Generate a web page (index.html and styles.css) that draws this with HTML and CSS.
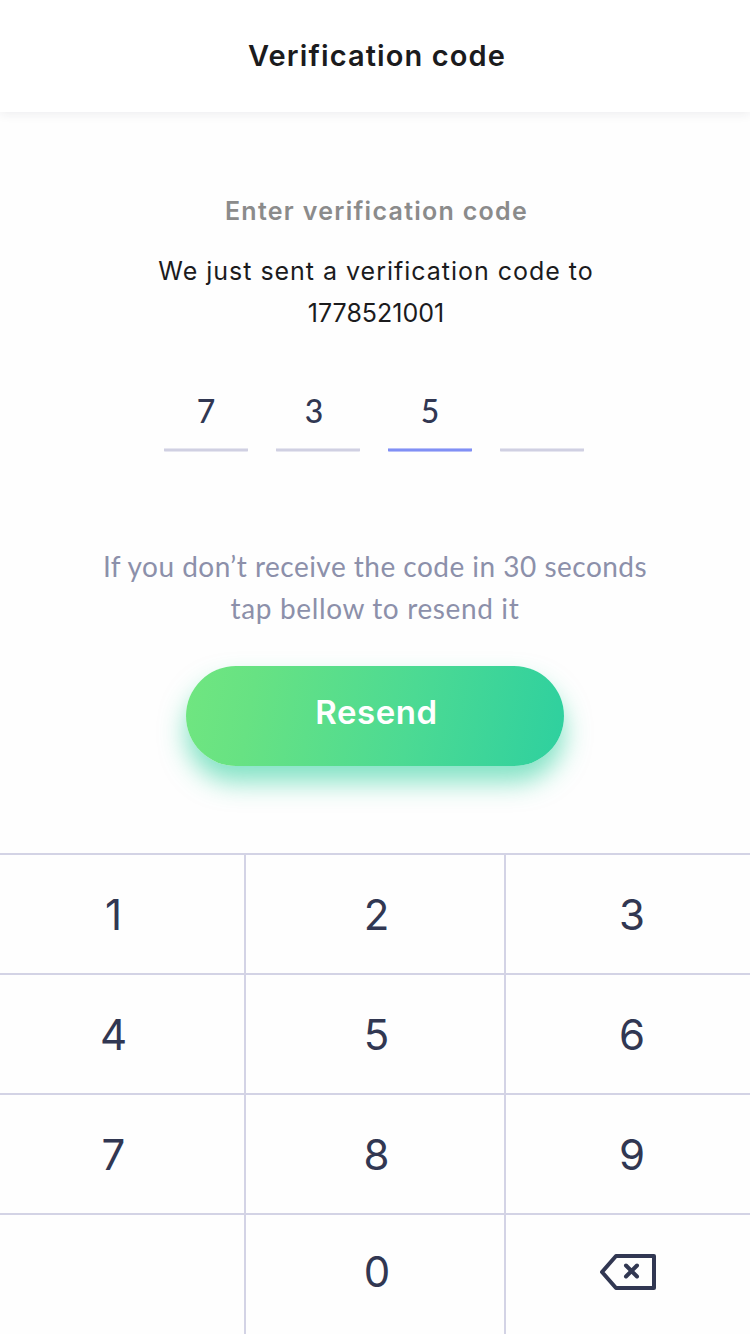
FILE: index.html
```html
<!DOCTYPE html>
<html lang="en">
<head>
<meta charset="utf-8">
<title>Verification code</title>
<link rel="stylesheet" href="styles.css">
</head>
<body>
<div class="screen">
  <header class="header"><h1 class="title">Verification code</h1></header>
  <main class="content">
    <h2 class="subtitle">Enter verification code</h2>
    <p class="message"><span class="sent">We just sent a verification code to</span><br><span class="phone">1778521001</span></p>
    <div class="code">
      <div class="slot">7</div>
      <div class="slot slot-shifted">3</div>
      <div class="slot slot-active">5</div>
      <div class="slot"></div>
    </div>
    <p class="hint"><span class="hint-first">If you don’t receive the code in 30 seconds</span><br><span class="hint-second">tap bellow to resend it</span></p>
    <button class="resend">Resend</button>
  </main>
  <div class="keypad">
    <div class="key key-left">1</div><div class="key">2</div><div class="key key-right">3</div>
    <div class="key key-left">4</div><div class="key">5</div><div class="key key-right">6</div>
    <div class="key key-left">7</div><div class="key">8</div><div class="key key-right">9</div>
    <div class="key key-left"></div><div class="key key-zero">0</div>
    <div class="key key-delete">
      <svg width="56" height="36" viewBox="0 0 56 36" fill="none" stroke="#313752" stroke-width="4">
        <path d="M16 2H54V34H16L2 18Z" stroke-linejoin="round"/>
        <path d="M26 11.5L37 22.500M37 11.500L26 22.500" stroke-linecap="round"/>
      </svg>
    </div>
  </div>
</div>
</body>
</html>
```
FILE: styles.css
```css
* { box-sizing: border-box; }
body { margin: 0; }
h1, h2, p { margin: 0; }
.screen {
  width: 750px;
  height: 1334px;
  display: flex;
  flex-direction: column;
  overflow: hidden;
  background: #fefefe;
  font-family: Inter, "Liberation Sans", sans-serif;
}
.header {
  height: 112px;
  flex: none;
  background: #fff;
  box-shadow: 0 2px 10px rgba(40, 40, 60, 0.08);
  text-align: center;
}
.title {
  padding-left: 4px;
  font-size: 29px;
  line-height: 112px;
  font-weight: 600;
  letter-spacing: 1.1px;
  color: #1b1b1d;
}
.content {
  height: 741px;
  flex: none;
  display: flex;
  flex-direction: column;
  align-items: center;
  white-space: nowrap;
}
.subtitle {
  margin-top: 78px;
  padding-left: 3px;
  font-size: 25px;
  line-height: 42px;
  font-weight: 600;
  letter-spacing: 1.28px;
  color: #8b8b8b;
}
.message {
  margin-top: 18px;
  padding-left: 2px;
  font-size: 25px;
  line-height: 42px;
  text-align: center;
  color: #1b1b1d;
}
.sent { letter-spacing: 0.98px; }
.code {
  display: flex;
  gap: 28px;
  margin-top: 54px;
  margin-right: 2px;
}
.slot {
  width: 84px;
  height: 64px;
  border-radius: 1px;
  background: linear-gradient(#e6e6f0 1px, #d0d0e2 1px, #d0d0e2 3px, #e6e6f0 3px) bottom / 100% 4px no-repeat;
  text-align: center;
  font: 500 32px/46px Lato, sans-serif;
  color: #313752;
}
.slot-shifted { padding-right: 8px; }
.slot-active {
  background-image: linear-gradient(#b9c0f9 1px, #8090f5 1px, #8090f5 3px, #b9c0f9 3px);
}
.hint {
  margin-top: 93px;
  font: 28px/42px Lato, sans-serif;
  text-align: center;
  color: #8c90aa;
}
.hint-first { letter-spacing: 0.48px; }
.hint-second { letter-spacing: 0.63px; }
.resend {
  width: 378px;
  height: 100px;
  margin-top: 37px;
  padding: 0 0 7px 3px;
  border: 0;
  border-radius: 50px;
  background: linear-gradient(100deg, #70e680 0%, #67e283 18%, #4cda93 59%, #2ed09f 100%);
  box-shadow: 0 16px 26px rgba(46, 208, 159, 0.6);
  color: #fff;
  font: 600 33px/1 Inter, sans-serif;
  letter-spacing: 0.6px;
}
.keypad {
  height: 481px;
  flex: none;
  display: grid;
  grid-template-columns: 244px 258px 244px;
  grid-template-rows: 118px 118px 118px 119px;
  gap: 2px;
  padding-top: 2px;
  background: #d3d3e5;
}
.key {
  display: flex;
  align-items: center;
  justify-content: center;
  background: #fefefe;
  color: #313752;
  font-size: 42px;
  line-height: 1;
  padding: 2px 0 0 3px;
}
.key-left { padding-right: 20px; }
.key-right { padding-left: 8px; }
.key-zero { padding: 0 0 5px 4px; }
.key-delete { padding: 0 0 5px; }
```
